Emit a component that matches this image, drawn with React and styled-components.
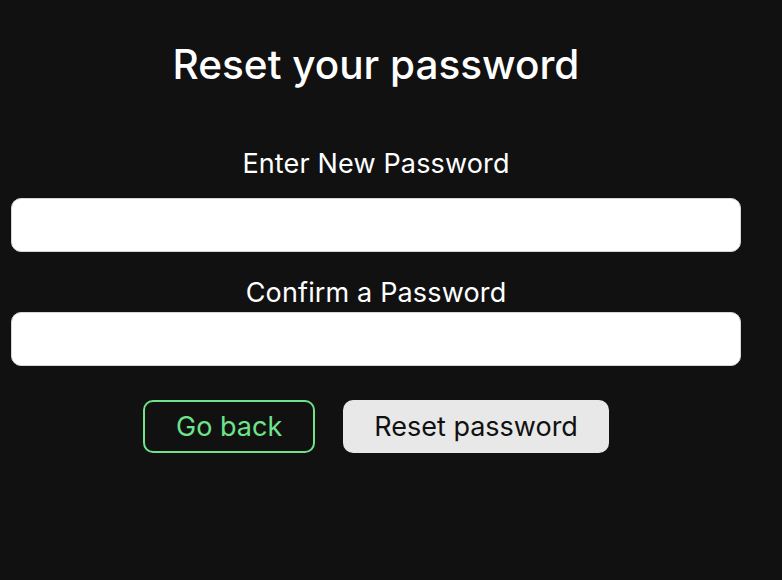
import React, { useState } from 'react';
import styled, { createGlobalStyle } from 'styled-components';

const GlobalStyle = createGlobalStyle`
  html, body {
    margin: 0;
    padding: 0;
    background: #111111;
  }
  body {
    font-family: Inter, 'Noto Sans', sans-serif;
    color: #ffffff;
  }
`;

const Page = styled.div`
  width: 730px;
  padding: 41px 11px 0 11px;
  display: flex;
  flex-direction: column;
  align-items: center;
`;

const Title = styled.h1`
  margin: 0 0 60px 0;
  font-size: 40.5px;
  line-height: 48px;
  font-weight: 500;
`;

const Form = styled.form`
  width: 100%;
  display: flex;
  flex-direction: column;
  align-items: center;
`;

const Label = styled.label`
  font-size: 27px;
  line-height: 30px;
  font-weight: 400;
  letter-spacing: 0.15px;
  margin-top: ${p => p.top || 0}px;
  margin-bottom: ${p => p.bottom || 0}px;
`;

const Input = styled.input`
  width: 100%;
  height: 54px;
  box-sizing: border-box;
  border: 1px solid #d6d6d6;
  border-radius: 10px;
  background: #ffffff;
  font-family: inherit;
  font-size: 20px;
  padding: 0 16px;
  outline: none;
`;

const Actions = styled.div`
  display: flex;
  gap: 28px;
  margin-top: 34px;
`;

const Button = styled.button`
  height: 53px;
  box-sizing: border-box;
  border-radius: 10px;
  font-family: inherit;
  font-size: 27px;
  font-weight: 400;
  padding: 0 ${p => p.pad}px;
  cursor: pointer;
  border: ${p => (p.outline ? '2px solid #6ee38a' : 'none')};
  background: ${p => (p.outline ? 'transparent' : '#e8e8e8')};
  color: ${p => (p.outline ? '#6ee38a' : '#111111')};
`;

function App() {
  const [password, setPassword] = useState('');
  const [confirm, setConfirm] = useState('');

  return (
    <>
      <GlobalStyle />
      <Page>
        <Title>Reset your password</Title>
        <Form onSubmit={e => e.preventDefault()}>
          <Label htmlFor="new-password" bottom={19}>
            Enter New Password
          </Label>
          <Input
            id="new-password"
            type="password"
            value={password}
            onChange={e => setPassword(e.target.value)}
          />
          <Label htmlFor="confirm-password" top={26} bottom={4}>
            Confirm a Password
          </Label>
          <Input
            id="confirm-password"
            type="password"
            value={confirm}
            onChange={e => setConfirm(e.target.value)}
          />
          <Actions>
            <Button type="button" outline pad={31}>
              Go back
            </Button>
            <Button type="submit" pad={31}>
              Reset password
            </Button>
          </Actions>
        </Form>
      </Page>
    </>
  );
}

export default App;
